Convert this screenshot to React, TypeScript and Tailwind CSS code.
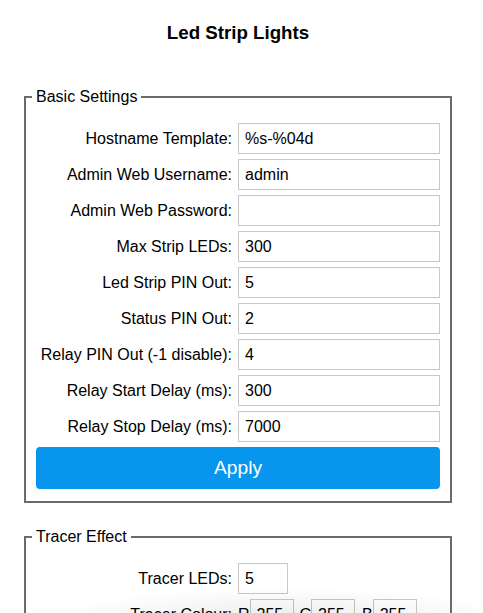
import React from "react";

const rows: [string, string][] = [
  ["Hostname Template:", "%s-%04d"],
  ["Admin Web Username:", "admin"],
  ["Admin Web Password:", ""],
  ["Max Strip LEDs:", "300"],
  ["Led Strip PIN Out:", "5"],
  ["Status PIN Out:", "2"],
  ["Relay PIN Out (-1 disable):", "4"],
  ["Relay Start Delay (ms):", "300"],
  ["Relay Stop Delay (ms):", "7000"],
];

const inputCls =
  "h-[31px] border border-[#c8c8c8] bg-white pl-[6px] text-[16px] text-black outline-none";

export default function App() {
  return (
    <div
      className="relative min-h-[613px] overflow-hidden bg-white text-black"
      style={{ fontFamily: '"Liberation Sans", Arial, sans-serif' }}
    >
      <h3 className="pt-[22px] text-center text-[18.72px] font-bold leading-[22px] w-[476px]">
        Led Strip Lights
      </h3>
      <fieldset className="mt-[44px] ml-[24px] w-[428px] border-2 border-[#6b6b6b] pl-[6px] pr-[10px] pb-[12px]">
        <legend className="px-[4px] text-[16px] leading-[18px]">Basic Settings</legend>
        <div className="ml-[4px] pt-[17px]">
          <div className="grid grid-cols-[196px_202px] gap-x-[6px] gap-y-[5px]">
            {rows.map(([label, value]) => (
              <React.Fragment key={label}>
                <div className="flex items-center justify-end text-[16px] leading-[18px]">
                  {label}
                </div>
                <input className={inputCls + " w-[202px]"} defaultValue={value} />
              </React.Fragment>
            ))}
          </div>
          <button className="mt-[5px] h-[42px] w-[404px] rounded-[4px] bg-[#0795ee] text-[19.2px] text-white">
            Apply
          </button>
        </div>
      </fieldset>
      <fieldset className="mt-[25px] ml-[24px] w-[428px] border-2 border-[#6b6b6b] pl-[6px] pr-[10px] pb-[12px]">
        <legend className="px-[4px] text-[16px] leading-[18px]">Tracer Effect</legend>
        <div className="ml-[4px] pt-[17px]">
          <div className="grid grid-cols-[196px_202px] gap-x-[6px] gap-y-[5px]">
            <div className="flex items-center justify-end text-[16px] leading-[18px]">
              Tracer LEDs:
            </div>
            <input className={inputCls + " w-[50px]"} defaultValue="5" />
            <div className="flex items-center justify-end text-[16px] leading-[18px]">
              Tracer Colour:
            </div>
            <div className="flex items-center text-[16px]">
              <span>R</span>
              <input className={inputCls + " w-[44px]"} defaultValue="255" />
              <span className="ml-[6px] mr-[-1px]">G</span>
              <input className={inputCls + " w-[44px]"} defaultValue="255" />
              <span className="ml-[7px]">B</span>
              <input className={inputCls + " w-[44px]"} defaultValue="255" />
            </div>
          </div>
        </div>
      </fieldset>
      <div className="pointer-events-none absolute left-[40px] right-[-40px] top-[585px] h-[60px] bg-[radial-gradient(ellipse_at_center,rgba(0,0,0,0.07),transparent_65%)]" />
    </div>
  );
}
